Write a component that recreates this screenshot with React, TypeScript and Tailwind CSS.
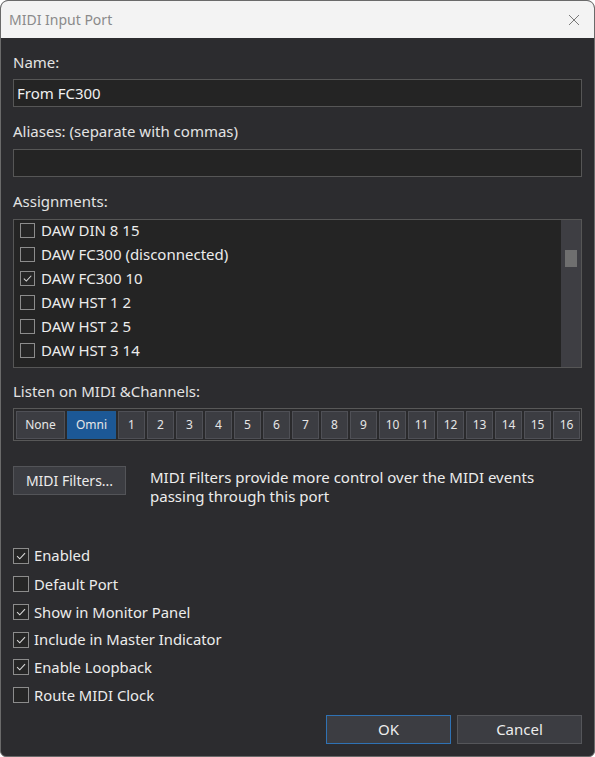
import { ReactNode } from "react";

const FONT = { fontFamily: '"Noto Sans", "Open Sans", sans-serif' };

function CheckMark() {
  return (
    <svg viewBox="0 0 16 16" className="w-full h-full">
      <path d="M3.5 8.2 L6.6 11.2 L12.6 4.6" fill="none" stroke="#d6d6d6" strokeWidth="1.3" />
    </svg>
  );
}

function Box({ checked, size = 15 }: { checked?: boolean; size?: number }) {
  return (
    <div
      className="shrink-0 border border-[#8c8c8c] bg-[#262626] flex items-center justify-center"
      style={{ width: size, height: size }}
    >
      {checked && <CheckMark />}
    </div>
  );
}

function Label({ children, className = "" }: { children: ReactNode; className?: string }) {
  return <div className={"h-[20px] leading-[20px] text-[15px] text-[#e3e3e3] " + className}>{children}</div>;
}

const assignments = [
  { name: "DAW DIN 8 15", checked: false },
  { name: "DAW FC300 (disconnected)", checked: false },
  { name: "DAW FC300 10", checked: true },
  { name: "DAW HST 1 2", checked: false },
  { name: "DAW HST 2 5", checked: false },
  { name: "DAW HST 3 14", checked: false },
];

const options = [
  { name: "Enabled", checked: true, h: "h-[29px]" },
  { name: "Default Port", checked: false, h: "h-[28px]" },
  { name: "Show in Monitor Panel", checked: true, h: "h-[28px]" },
  { name: "Include in Master Indicator", checked: true, h: "h-[27px]" },
  { name: "Enable Loopback", checked: true, h: "h-[28px]" },
  { name: "Route MIDI Clock", checked: false, h: "h-[28px]" },
];

const channels = Array.from({ length: 16 }, (_, i) => String(i + 1));

export default function App() {
  return (
    <div className="w-[595px] h-[757px] bg-[#2c2c2f] border border-[#6a6a6a] rounded-t-[8px] rounded-b-[6px] overflow-hidden flex flex-col" style={FONT}>
      <div className="h-[37px] shrink-0 bg-[#f3f3f3] flex items-center justify-between pl-[8px] pr-[14px]">
        <span className="text-[14px] text-[#8a8a8a]">MIDI Input Port</span>
        <svg viewBox="0 0 12 12" className="w-[12px] h-[12px]">
          <path d="M1 1 L11 11 M11 1 L1 11" stroke="#7a7a7a" strokeWidth="1" />
        </svg>
      </div>

      <div className="flex-1 flex flex-col px-[12px]">
        <Label className="mt-[14px]">Name:</Label>
        <div className="mt-[7px] h-[28px] bg-[#242424] border border-[#565656] flex items-center px-[3px] text-[15px] text-[#f0f0f0]">
          From FC300
        </div>

        <Label className="mt-[14px]">Aliases: (separate with commas)</Label>
        <div className="mt-[8px] h-[28px] bg-[#242424] border border-[#565656]" />

        <Label className="mt-[14px]">Assignments:</Label>
        <div className="mt-[8px] h-[149px] bg-[#242424] border border-[#565656] flex overflow-hidden">
          <div className="flex-1 flex flex-col -mt-[2px]">
            {assignments.map((a) => (
              <div key={a.name} className="h-[24px] shrink-0 flex items-center gap-[6px] pl-[6px]">
                <Box checked={a.checked} />
                <span className="text-[15px] text-[#ececec]">{a.name}</span>
              </div>
            ))}
          </div>
          <div className="w-[20px] bg-[#3e3e43] flex flex-col items-center pt-[30px]">
            <div className="w-[12px] h-[17px] bg-[#6f6f6f]" />
          </div>
        </div>

        <Label className="mt-[13px]">Listen on MIDI &amp;Channels:</Label>
        <div className="mt-[7px] h-[33px] border border-[#585858] bg-[#2a2a2c] flex gap-[2px] p-[2px] pr-[1px] pb-0">
          <div className="w-[49px] h-[28px] bg-[#3c3d42] border border-[#4f5056] flex items-center justify-center text-[12px] text-[#e6e6e6]">None</div>
          <div className="w-[49px] h-[28px] bg-[#1c5896] border border-[#1f5a92] flex items-center justify-center text-[12px] text-[#e6e6e6]">Omni</div>
          {channels.map((c) => (
            <div key={c} className="flex-1 h-[28px] bg-[#3c3d42] border border-[#4f5056] flex items-center justify-center text-[12px] text-[#e6e6e6]">
              {c}
            </div>
          ))}
        </div>

        <div className="mt-[25px] flex items-start">
          <div className="w-[113px] h-[29px] bg-[#3c3d42] border border-[#535458] flex items-center justify-center text-[14px] text-[#ececec]">
            MIDI Filters...
          </div>
          <div className="ml-[24px] mt-[2px] text-[15px] leading-[19px] text-[#ececec]">
            MIDI Filters provide more control over the MIDI events
            <br />
            passing through this port
          </div>
        </div>

        <div className="mt-[35px] flex flex-col">
          {options.map((o) => (
            <div key={o.name} className={o.h + " flex items-center gap-[5px]"}>
              <Box checked={o.checked} size={16} />
              <span className="text-[14.8px] text-[#ececec]">{o.name}</span>
            </div>
          ))}
        </div>

        <div className="mt-[6px] flex justify-end gap-[6px]">
          <div className="w-[125px] h-[29px] bg-[#3c3d42] border border-[#2f72b4] flex items-center justify-center text-[15px] text-[#ececec]">OK</div>
          <div className="w-[125px] h-[29px] bg-[#3c3d42] border border-[#55565a] flex items-center justify-center text-[15px] text-[#ececec]">Cancel</div>
        </div>
      </div>
    </div>
  );
}
